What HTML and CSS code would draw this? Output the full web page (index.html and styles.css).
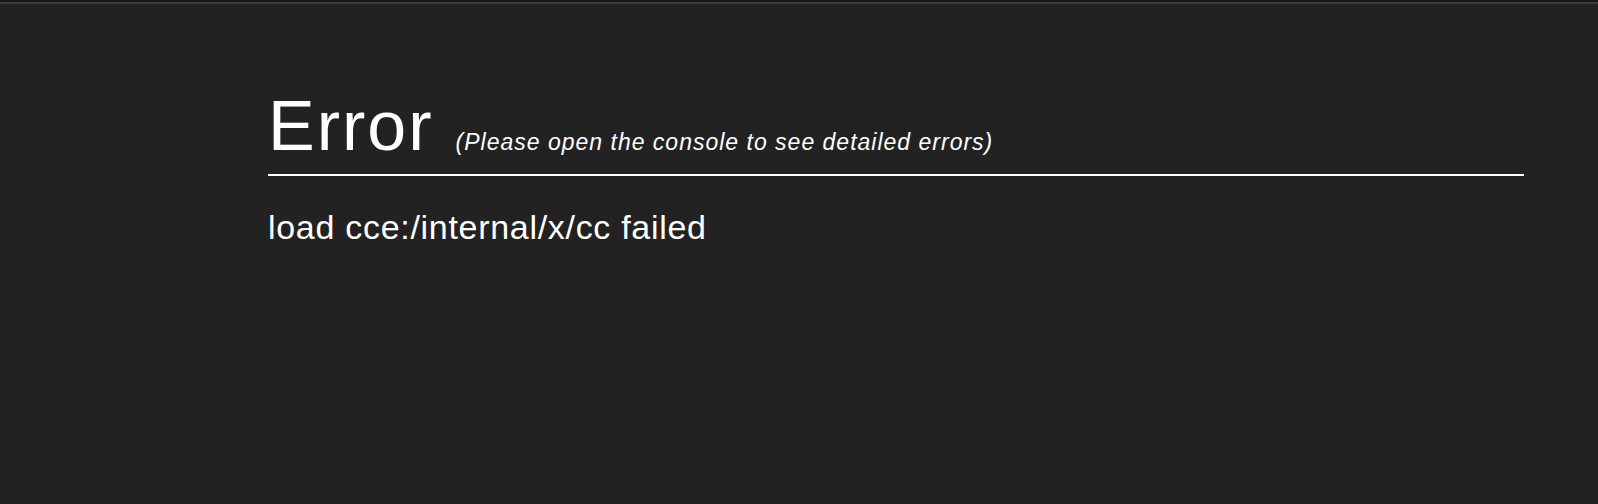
FILE: index.html
```html
<!DOCTYPE html>
<html lang="en">
<head>
<meta charset="utf-8">
<title>Error</title>
<link rel="stylesheet" href="styles.css">
</head>
<body>
<div class="chrome"></div>
<main class="page">
  <h1 class="title"><span class="title-main">Error</span><span class="title-hint">(Please open the console to see detailed errors)</span></h1>
  <p class="message">load cce:/internal/x/cc failed</p>
</main>
</body>
</html>
```
FILE: styles.css
```css
html, body {
  margin: 0;
  padding: 0;
  background: #222222;
  color: #ffffff;
  font-family: "Liberation Sans", Arial, sans-serif;
}

body {
  height: 504px;
  overflow: hidden;
}

.chrome {
  border-top: 2px solid #1a1a1a;
  height: 2px;
  background: #3c3c3c;
}

.page {
  margin: 0 74px 0 268px;
}

.title {
  margin: 87px 0 0;
  padding: 0 0 13px;
  border-bottom: 2px solid #ffffff;
  font-weight: normal;
  font-size: 70px;
  line-height: 70px;
  white-space: nowrap;
}

.title-main {
  letter-spacing: 2px;
}

.title-hint {
  margin-left: 22px;
  font-size: 23px;
  line-height: 23px;
  font-style: italic;
  letter-spacing: 1px;
}

.message {
  margin: 31px 0 0;
  font-size: 34px;
  line-height: 40px;
  letter-spacing: 0.7px;
}
```
